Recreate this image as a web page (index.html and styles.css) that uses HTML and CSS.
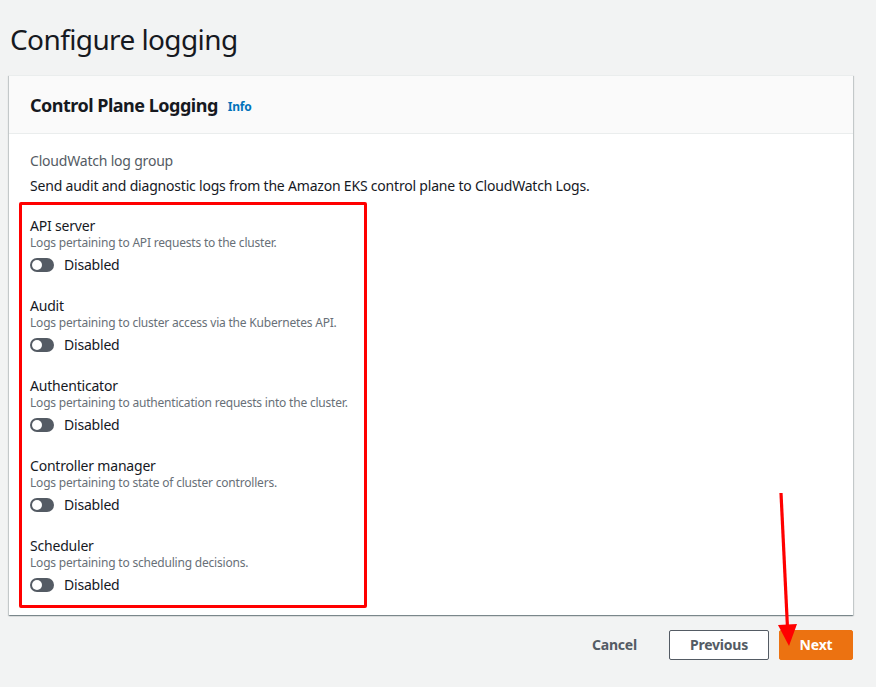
FILE: index.html
```html
<!DOCTYPE html>
<html lang="en">
<head>
<meta charset="utf-8">
<title>Configure logging</title>
<link rel="stylesheet" href="styles.css">
</head>
<body>
<div class="page">
  <h1 class="title">Configure logging</h1>
  <section class="card">
    <header class="card-header">
      <h2 class="card-title">Control Plane Logging</h2>
      <a class="info" href="#">Info</a>
    </header>
    <div class="card-body">
      <div class="field-label">CloudWatch log group</div>
      <div class="field-desc">Send audit and diagnostic logs from the Amazon EKS control plane to CloudWatch Logs.</div>
      <div class="highlight">
        <div class="item">
          <div class="item-label">API server</div>
          <div class="item-desc">Logs pertaining to API requests to the cluster.</div>
          <div class="toggle-row"><span class="toggle"><span class="knob"></span></span><span class="toggle-text">Disabled</span></div>
        </div>
        <div class="item">
          <div class="item-label">Audit</div>
          <div class="item-desc">Logs pertaining to cluster access via the Kubernetes API.</div>
          <div class="toggle-row"><span class="toggle"><span class="knob"></span></span><span class="toggle-text">Disabled</span></div>
        </div>
        <div class="item">
          <div class="item-label">Authenticator</div>
          <div class="item-desc">Logs pertaining to authentication requests into the cluster.</div>
          <div class="toggle-row"><span class="toggle"><span class="knob"></span></span><span class="toggle-text">Disabled</span></div>
        </div>
        <div class="item">
          <div class="item-label">Controller manager</div>
          <div class="item-desc">Logs pertaining to state of cluster controllers.</div>
          <div class="toggle-row"><span class="toggle"><span class="knob"></span></span><span class="toggle-text">Disabled</span></div>
        </div>
        <div class="item">
          <div class="item-label">Scheduler</div>
          <div class="item-desc">Logs pertaining to scheduling decisions.</div>
          <div class="toggle-row"><span class="toggle"><span class="knob"></span></span><span class="toggle-text">Disabled</span></div>
        </div>
      </div>
    </div>
  </section>
  <div class="actions">
    <button class="btn btn-link">Cancel</button>
    <button class="btn btn-normal">Previous</button>
    <button class="btn btn-primary">Next</button>
  </div>
</div>
<svg class="arrow" width="876" height="687" viewBox="0 0 876 687" aria-hidden="true">
  <line x1="781" y1="493" x2="787.5" y2="628" stroke="#ff0000" stroke-width="3.2"/>
  <polygon points="778,625 797,624 789,646" fill="#ff0000"/>
</svg>
</body>
</html>
```
FILE: styles.css
```css
* { box-sizing: border-box; }
html, body { margin: 0; padding: 0; }
body {
  background: #f2f3f3;
  font-family: "Noto Sans", "Open Sans", sans-serif;
  color: #16191f;
  width: 876px;
  height: 687px;
  overflow: hidden;
  letter-spacing: -0.2px;
}
.page {
  padding: 0 23px 0 9px;
}
.title {
  margin: 0;
  padding: 21px 0 0 1px;
  font-size: 28px;
  line-height: 36px;
  font-weight: 400;
  letter-spacing: -0.6px;
  color: #16191f;
}
.card {
  margin-top: 18px;
  background: #fff;
  box-shadow: 0 1px 1px 0 rgba(0, 28, 36, 0.3), 1px 1px 1px 0 rgba(0, 28, 36, 0.15), -1px 1px 1px 0 rgba(0, 28, 36, 0.15);
  border-top: 1px solid #eaeded;
}
.card-header {
  height: 58px;
  background: #fafafa;
  border-bottom: 1px solid #eaeded;
  display: flex;
  align-items: center;
  padding: 0 21px;
  gap: 10px;
}
.card-title {
  margin: 0;
  font-size: 18px;
  font-weight: 700;
  line-height: 24px;
  letter-spacing: -0.5px;
  color: #16191f;
}
.info {
  color: #0073bb;
  font-size: 12px;
  font-weight: 700;
  text-decoration: none;
  padding-top: 3px;
}
.card-body {
  padding: 17px 21px 7px;
}
.field-label {
  font-size: 14px;
  line-height: 20px;
  color: #545b64;
}
.field-desc {
  margin-top: 5px;
  font-size: 14px;
  line-height: 20px;
  color: #16191f;
  white-space: nowrap;
}
.highlight {
  margin: 6px 0 0 -11px;
  width: 348px;
  border: 3px solid #ff0000;
  border-radius: 2px;
  padding: 12px 8px 10px;
  display: flex;
  flex-direction: column;
  gap: 22px;
}
.item-label {
  font-size: 14px;
  line-height: 18px;
  color: #16191f;
}
.item-desc {
  font-size: 12px;
  line-height: 16px;
  color: #687078;
  white-space: nowrap;
}
.toggle-row {
  margin-top: 4px;
  display: flex;
  align-items: center;
  gap: 10px;
  height: 20px;
}
.toggle {
  width: 24px;
  height: 14px;
  border-radius: 7px;
  background: #545b64;
  position: relative;
  flex: none;
}
.knob {
  position: absolute;
  left: 2px;
  top: 2px;
  width: 10px;
  height: 10px;
  border-radius: 50%;
  background: #fff;
}
.toggle-text {
  font-size: 14px;
  line-height: 20px;
  color: #16191f;
}
.actions {
  margin-top: 15px;
  display: flex;
  justify-content: flex-end;
  align-items: center;
}
.btn {
  font-family: "Noto Sans", "Open Sans", sans-serif;
  font-size: 14px;
  font-weight: 700;
  line-height: 20px;
  letter-spacing: -0.2px;
  border-radius: 2px;
  cursor: pointer;
}
.btn-link {
  background: none;
  border: none;
  color: #545b64;
  padding: 5px 20px;
  margin-right: 12px;
}
.btn-normal {
  background: #fff;
  border: 1px solid #545b64;
  color: #545b64;
  width: 100px;
  height: 30px;
  padding: 0;
  margin-right: 10px;
}
.btn-primary {
  background: #ec7211;
  border: 1px solid #ec7211;
  color: #fff;
  width: 74px;
  height: 30px;
  padding: 0;
}
.arrow {
  position: absolute;
  left: 0;
  top: 0;
  pointer-events: none;
}
```
